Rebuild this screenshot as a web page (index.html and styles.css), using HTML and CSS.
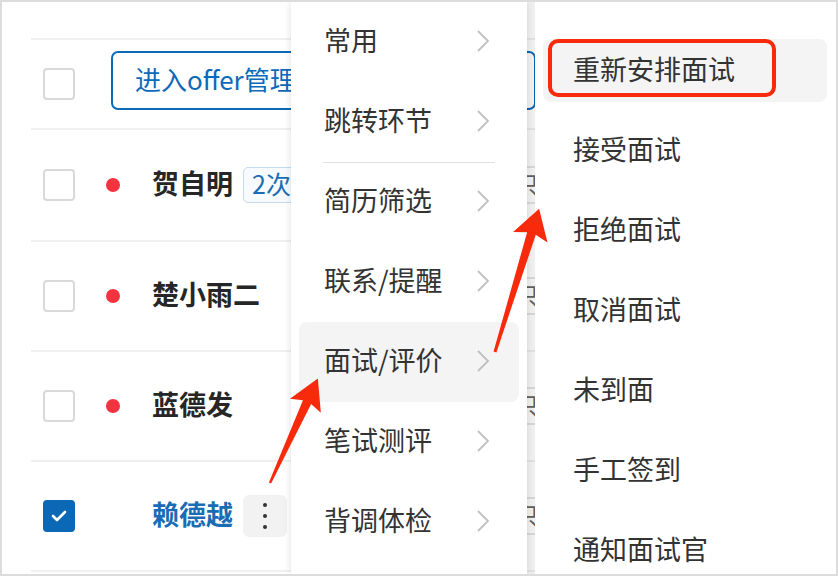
FILE: index.html
```html
<!DOCTYPE html>
<html lang="zh-CN">
<head>
    <meta charset="UTF-8">
    <title>候选人操作菜单</title>
    <link rel="stylesheet" href="styles.css">
</head>
<body>

    <div class="frame">
        <div class="table">
            <div class="thead"></div>

            <div class="row row-tools">
                <span class="check"></span>
                <div class="tools">
                    <button class="btn-line">进入offer管理</button>
                    <button class="btn-line">批量安排面试</button>
                </div>
            </div>

            <div class="row row-tall">
                <span class="check"></span>
                <span class="dot"></span>
                <div class="who">
                    <span class="name">贺自明</span>
                    <span class="tag-blue">2次</span>
                </div>
                <span class="tag-gray">只</span>
            </div>

            <div class="row">
                <span class="check"></span>
                <span class="dot"></span>
                <div class="who"><span class="name">楚小雨二</span></div>
                <span class="tag-gray">只</span>
            </div>

            <div class="row">
                <span class="check"></span>
                <span class="dot"></span>
                <div class="who"><span class="name">蓝德发</span></div>
                <span class="tag-gray">只</span>
            </div>

            <div class="row">
                <span class="check on">
                    <svg width="16" height="12" viewBox="0 0 16 12"><polyline points="2,6 6,10 14,2" fill="none" stroke="#fff" stroke-width="2.6" stroke-linecap="round" stroke-linejoin="round"/></svg>
                </span>
                <span></span>
                <div class="who">
                    <span class="name picked">赖德越</span>
                    <span class="more"><i></i><i></i><i></i></span>
                </div>
                <span class="tag-gray">只</span>
            </div>

            <div class="row-end"></div>
        </div>

        <div class="menu menu-main">
            <div class="menu-item"><span>常用</span> <svg class="chev" width="14" height="22" viewBox="0 0 14 22"><polyline points="2,1 12,11 2,21"/></svg></div>
            <div class="menu-item"><span>跳转环节</span> <svg class="chev" width="14" height="22" viewBox="0 0 14 22"><polyline points="2,1 12,11 2,21"/></svg></div>
            <div class="menu-sep"></div>
            <div class="menu-item"><span>简历筛选</span> <svg class="chev" width="14" height="22" viewBox="0 0 14 22"><polyline points="2,1 12,11 2,21"/></svg></div>
            <div class="menu-item"><span>联系/提醒</span> <svg class="chev" width="14" height="22" viewBox="0 0 14 22"><polyline points="2,1 12,11 2,21"/></svg></div>
            <div class="menu-item hover"><span>面试/评价</span> <svg class="chev" width="14" height="22" viewBox="0 0 14 22"><polyline points="2,1 12,11 2,21"/></svg></div>
            <div class="menu-item"><span>笔试测评</span> <svg class="chev" width="14" height="22" viewBox="0 0 14 22"><polyline points="2,1 12,11 2,21"/></svg></div>
            <div class="menu-item"><span>背调体检</span> <svg class="chev" width="14" height="22" viewBox="0 0 14 22"><polyline points="2,1 12,11 2,21"/></svg></div>
        </div>

        <div class="menu menu-sub">
            <div class="sub-item hover">重新安排面试</div>
            <div class="sub-item">接受面试</div>
            <div class="sub-item">拒绝面试</div>
            <div class="sub-item">取消面试</div>
            <div class="sub-item">未到面</div>
            <div class="sub-item">手工签到</div>
            <div class="sub-item">通知面试官</div>
        </div>

        <!-- annotation marks drawn on top of the screenshot -->
        <svg class="marks" width="838" height="576" viewBox="0 0 838 576">
            <rect x="550" y="41" width="224" height="54" rx="8" fill="none" stroke="#f82a0c" stroke-width="4"/>
            <g transform="translate(270 483) rotate(-65.4)">
                <polygon points="0,-1.2 89,-4.5 85,-17 115,0 85,17 89,4.5 0,1.2" fill="#f82a0c"/>
            </g>
            <g transform="translate(495 352) rotate(-72.9)">
                <polygon points="0,-1.5 124,-4.5 120,-18 150,0 120,18 124,4.5 0,1.5" fill="#f82a0c"/>
            </g>
        </svg>
    </div>

</body>
</html>
```

FILE: styles.css
```css
* {
    box-sizing: border-box;
}
body {
    margin: 0;
    font-family: "Noto Sans CJK SC", "Noto Sans", sans-serif;
    background-color: white;
}
.frame {
    position: relative;
    width: 838px;
    height: 576px;
    border: 2px solid #dcdcdc;
    overflow: hidden;
    background: #fff;
}

/* table behind the menus */
.table {
    padding-left: 29px;
}
.thead {
    height: 36px;
}
.row {
    display: grid;
    grid-template-columns: 44px 77px 353px 1fr;
    align-items: center;
    height: 110px;
    border-top: 2px solid #efefef;
}
.row-tools {
    height: 90px;
}
.row-tall {
    height: 112px;
}
.row-end {
    border-top: 2px solid #efefef;
}
.check {
    margin-left: 12px;
    width: 32px;
    height: 32px;
    border: 2px solid #d9d9d9;
    border-radius: 4px;
    background: #fff;
}
.check.on {
    display: flex;
    align-items: center;
    justify-content: center;
    background: #0b68b6;
    border-color: #0b68b6;
}
.dot {
    margin-left: 31px;
    width: 14px;
    height: 14px;
    border-radius: 50%;
    background: #f5333f;
}
.who {
    display: flex;
    align-items: center;
    gap: 10px;
}
.name {
    padding-bottom: 6px;
    font-size: 27px;
    font-weight: 700;
    color: #262626;
}
.name.picked {
    color: #1a6cb5;
}
.tag-blue {
    height: 36px;
    margin-bottom: 1px;
    padding: 0 8px;
    border: 1.5px solid #c3daef;
    border-radius: 5px;
    background: #f7fbff;
    color: #1a6cb5;
    font-size: 25px;
    line-height: 31px;
}
.tag-gray {
    justify-self: start;
    height: 38px;
    padding: 0 8px;
    border: 2px solid #e3e3e3;
    border-radius: 4px;
    color: #666;
    font-size: 24px;
    line-height: 32px;
}
.tools {
    grid-column: 2 / -1;
    display: flex;
    gap: 12px;
    margin-bottom: 7px;
}
.btn-line {
    flex: none;
    height: 59px;
    padding: 0 22px 5px;
    border: 2px solid #0d6ab8;
    border-radius: 7px;
    background: #fff;
    color: #0d6ab8;
    font-family: inherit;
    font-size: 26px;
}
.btn-line:first-child {
    margin-left: 36px;
}
.more {
    display: flex;
    flex-direction: column;
    align-items: center;
    justify-content: center;
    gap: 6.5px;
    width: 44px;
    height: 42px;
    border-radius: 6px;
    background: #f2f2f2;
}
.more i {
    width: 4.5px;
    height: 4.5px;
    border-radius: 50%;
    background: #333;
}

/* cascading menu */
.menu {
    position: absolute;
    top: 0;
    bottom: 0;
    background: #fff;
}
.menu-main {
    left: 289px;
    width: 236px;
    padding: 0 8px;
    box-shadow: 0 0 8px rgba(0, 0, 0, 0.12);
    z-index: 2;
}
.menu-item {
    display: flex;
    align-items: center;
    justify-content: space-between;
    height: 80px;
    padding: 0 29px 0 25px;
    border-radius: 8px;
    font-size: 27px;
    color: #333;
}
.menu-item span {
    padding-bottom: 6px;
}
.menu-item.hover,
.sub-item.hover {
    background: #f4f4f4;
}
.chev {
    margin-bottom: 2px;
}
.chev polyline {
    fill: none;
    stroke: #c0c0c0;
    stroke-width: 1.8;
}
.menu-sep {
    height: 1px;
    margin: 0 24px -1px;
    background: #e0e0e0;
}
.menu-sub {
    left: 533px;
    right: 0;
    padding: 37px 9px 0 8px;
    box-shadow: -8px 0 0 rgba(0, 0, 0, 0.06);
    z-index: 1;
}
.sub-item {
    display: flex;
    align-items: center;
    height: 63px;
    margin-bottom: 17px;
    padding: 0 0 4px 30px;
    border-radius: 8px;
    font-size: 27px;
    color: #333;
}

.marks {
    position: absolute;
    left: -2px;
    top: -2px;
    z-index: 3;
    pointer-events: none;
}
```
